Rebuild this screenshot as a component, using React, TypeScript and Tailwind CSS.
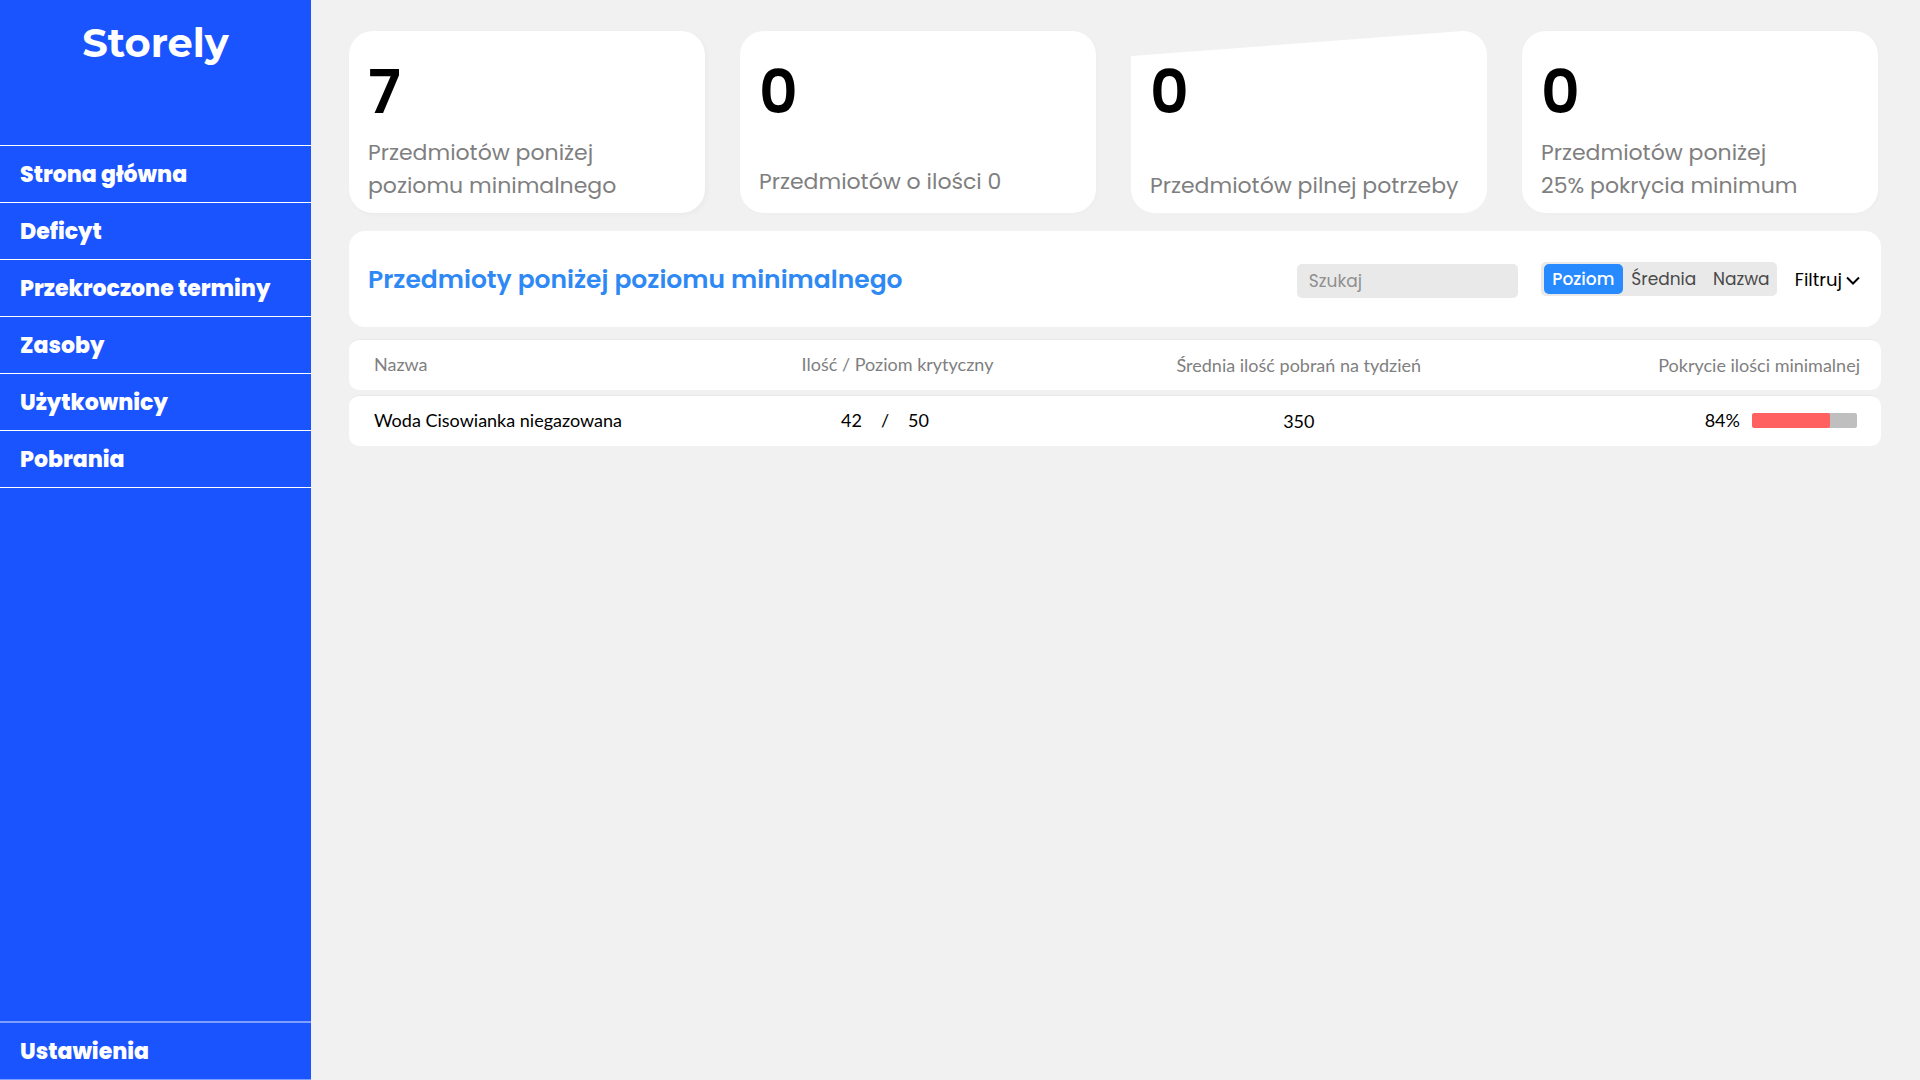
const navItems = [
  "Strona główna",
  "Deficyt",
  "Przekroczone terminy",
  "Zasoby",
  "Użytkownicy",
  "Pobrania",
];

const cards = [
  { value: 7, lines: ["Przedmiotów poniżej", "poziomu minimalnego"], shape: "pb-[11px] shadow-[2px_2px_5px_rgba(0,0,0,0.03)]" },
  { value: 0, lines: ["Przedmiotów o ilości 0"], shape: "pb-[15px] shadow-[1px_1px_4px_rgba(0,0,0,0.02)]" },
  {
    value: 0,
    lines: ["Przedmiotów pilnej potrzeby"],
    shape: "pb-[11px] [clip-path:polygon(0_25px,calc(100%-24px)_0,100%_0,100%_100%,0_100%)]",
  },
  { value: 0, lines: ["Przedmiotów poniżej", "25% pokrycia minimum"], shape: "pb-[11px] shadow-[1px_1px_4px_rgba(0,0,0,0.02)]" },
];

const items = [{ name: "Woda Cisowianka niegazowana", amount: 42, level: 50, average: 350, coverage: 84, fill: 74 }];

function Sidebar() {
  return (
    <aside className="flex w-[311px] shrink-0 flex-col bg-[#1a54ff] text-white">
      <div className="h-[145px] pt-4 text-center font-[Montserrat,Poppins,sans-serif] text-[40px] leading-[54px] font-bold">
        Storely
      </div>
      <nav className="flex grow flex-col text-[22px] font-extrabold">
        <ul className="border-t border-white">
          {navItems.map((label) => (
            <li key={label} className="border-b border-white">
              <a href="#" className="flex h-14 items-center pl-5">
                {label}
              </a>
            </li>
          ))}
        </ul>
        <a href="#" className="mt-auto flex h-[59px] items-center border-t-2 border-b border-[#7f9fff] pl-5">
          Ustawienia
        </a>
      </nav>
    </aside>
  );
}

function Cards() {
  return (
    <section className="mr-[3px] grid grid-cols-4 gap-[35px]">
      {cards.map((card, i) => (
        <article
          key={i}
          className={"flex min-h-[182px] flex-col justify-between rounded-3xl bg-white px-[19px] pt-[31px] " + card.shape}
        >
          <p className="text-[60px] leading-[60px] font-semibold text-black">{card.value}</p>
          <p className="text-[22px] leading-[33px] whitespace-nowrap text-[#7f7f7f]">
            {card.lines.map((line) => (
              <span key={line} className="block">
                {line}
              </span>
            ))}
          </p>
        </article>
      ))}
    </section>
  );
}

function Toolbar() {
  return (
    <section className="mt-[18px] flex h-24 items-center rounded-2xl bg-white pr-[21px] pl-[19px]">
      <h1 className="pt-0.5 text-[25px] leading-9 font-semibold text-[#2f89f5]">Przedmioty poniżej poziomu minimalnego</h1>
      <input
        type="search"
        aria-label="Szukaj"
        placeholder="Szukaj"
        className="mt-1 ml-auto h-[34px] w-[221px] rounded-[5px] bg-[#e9e9e9] px-3 text-[17px] placeholder:text-[#8f8f8f]"
      />
      <div className="ml-[23px] flex h-[34px] items-center rounded-[5px] bg-[#e9e9e9] px-[3px] text-[17px] leading-[26px] text-[#4a4a4a]">
        <button className="h-[30px] w-[79px] rounded-[5px] bg-[#278bff] font-medium text-white">Poziom</button>
        <button className="w-[82px] text-center">Średnia</button>
        <button className="w-[69px] pl-1 text-center">Nazwa</button>
      </div>
      <button className="ml-[18px] flex items-center gap-1 pt-0.5 text-[18px] leading-[26px] text-black">
        Filtruj
        <svg width="14" height="9" viewBox="0 0 14 9" fill="none" stroke="currentColor" strokeWidth="2" aria-hidden="true">
          <path d="M1 1.5 7 7.5 13 1.5" />
        </svg>
      </button>
    </section>
  );
}

const cell =
  "h-[51px] border-t border-[#e9e9e9] bg-white p-0 text-center font-normal first:rounded-l-[10px] first:pl-[25px] first:text-left last:rounded-r-[10px] last:text-right";

function StockTable() {
  return (
    <table className="mt-[7px] w-full table-fixed border-separate border-spacing-x-0 border-spacing-y-[5px] font-[Lato,sans-serif] text-[18px] leading-6">
      <colgroup>
        <col className="w-[23%]" />
        <col className="w-[26%]" />
        <col className="w-[26%]" />
        <col className="w-[25%]" />
      </colgroup>
      <thead className="text-[#7f7f7f]">
        <tr>
          <th scope="col" className={cell + " pb-0.5"}>Nazwa</th>
          <th scope="col" className={cell + " pr-1.5 pb-0.5"}>Ilość / Poziom krytyczny</th>
          <th scope="col" className={cell}>Średnia ilość pobrań na tydzień</th>
          <th scope="col" className={cell + " pr-[21px]"}>Pokrycie ilości minimalnej</th>
        </tr>
      </thead>
      <tbody className="text-black">
        {items.map((item) => (
          <tr key={item.name}>
            <td className={cell + " pb-0.5"}>{item.name}</td>
            <td className={cell + " pb-0.5"}>
              <div className="flex justify-center gap-[19px] pr-[31px]">
                <span>{item.amount}</span>
                <span>/</span>
                <span>{item.level}</span>
              </div>
            </td>
            <td className={cell}>{item.average}</td>
            <td className={cell + " pr-6 pb-0.5"}>
              <div className="flex items-center justify-end gap-3">
                <span>{item.coverage}%</span>
                <div className="h-[15px] w-[105px] overflow-hidden rounded-xs bg-[#bfbfbf]">
                  <div className="h-full rounded-xs bg-[#ff6161]" style={{ width: `${item.fill}%` }} />
                </div>
              </div>
            </td>
          </tr>
        ))}
      </tbody>
    </table>
  );
}

export default function App() {
  return (
    <div className="flex min-h-screen bg-[#f1f1f1] font-[Poppins,Inter,sans-serif]">
      <Sidebar />
      <main className="min-w-0 grow pt-[31px] pr-[39px] pb-8 pl-[38px]">
        <Cards />
        <Toolbar />
        <StockTable />
      </main>
    </div>
  );
}
